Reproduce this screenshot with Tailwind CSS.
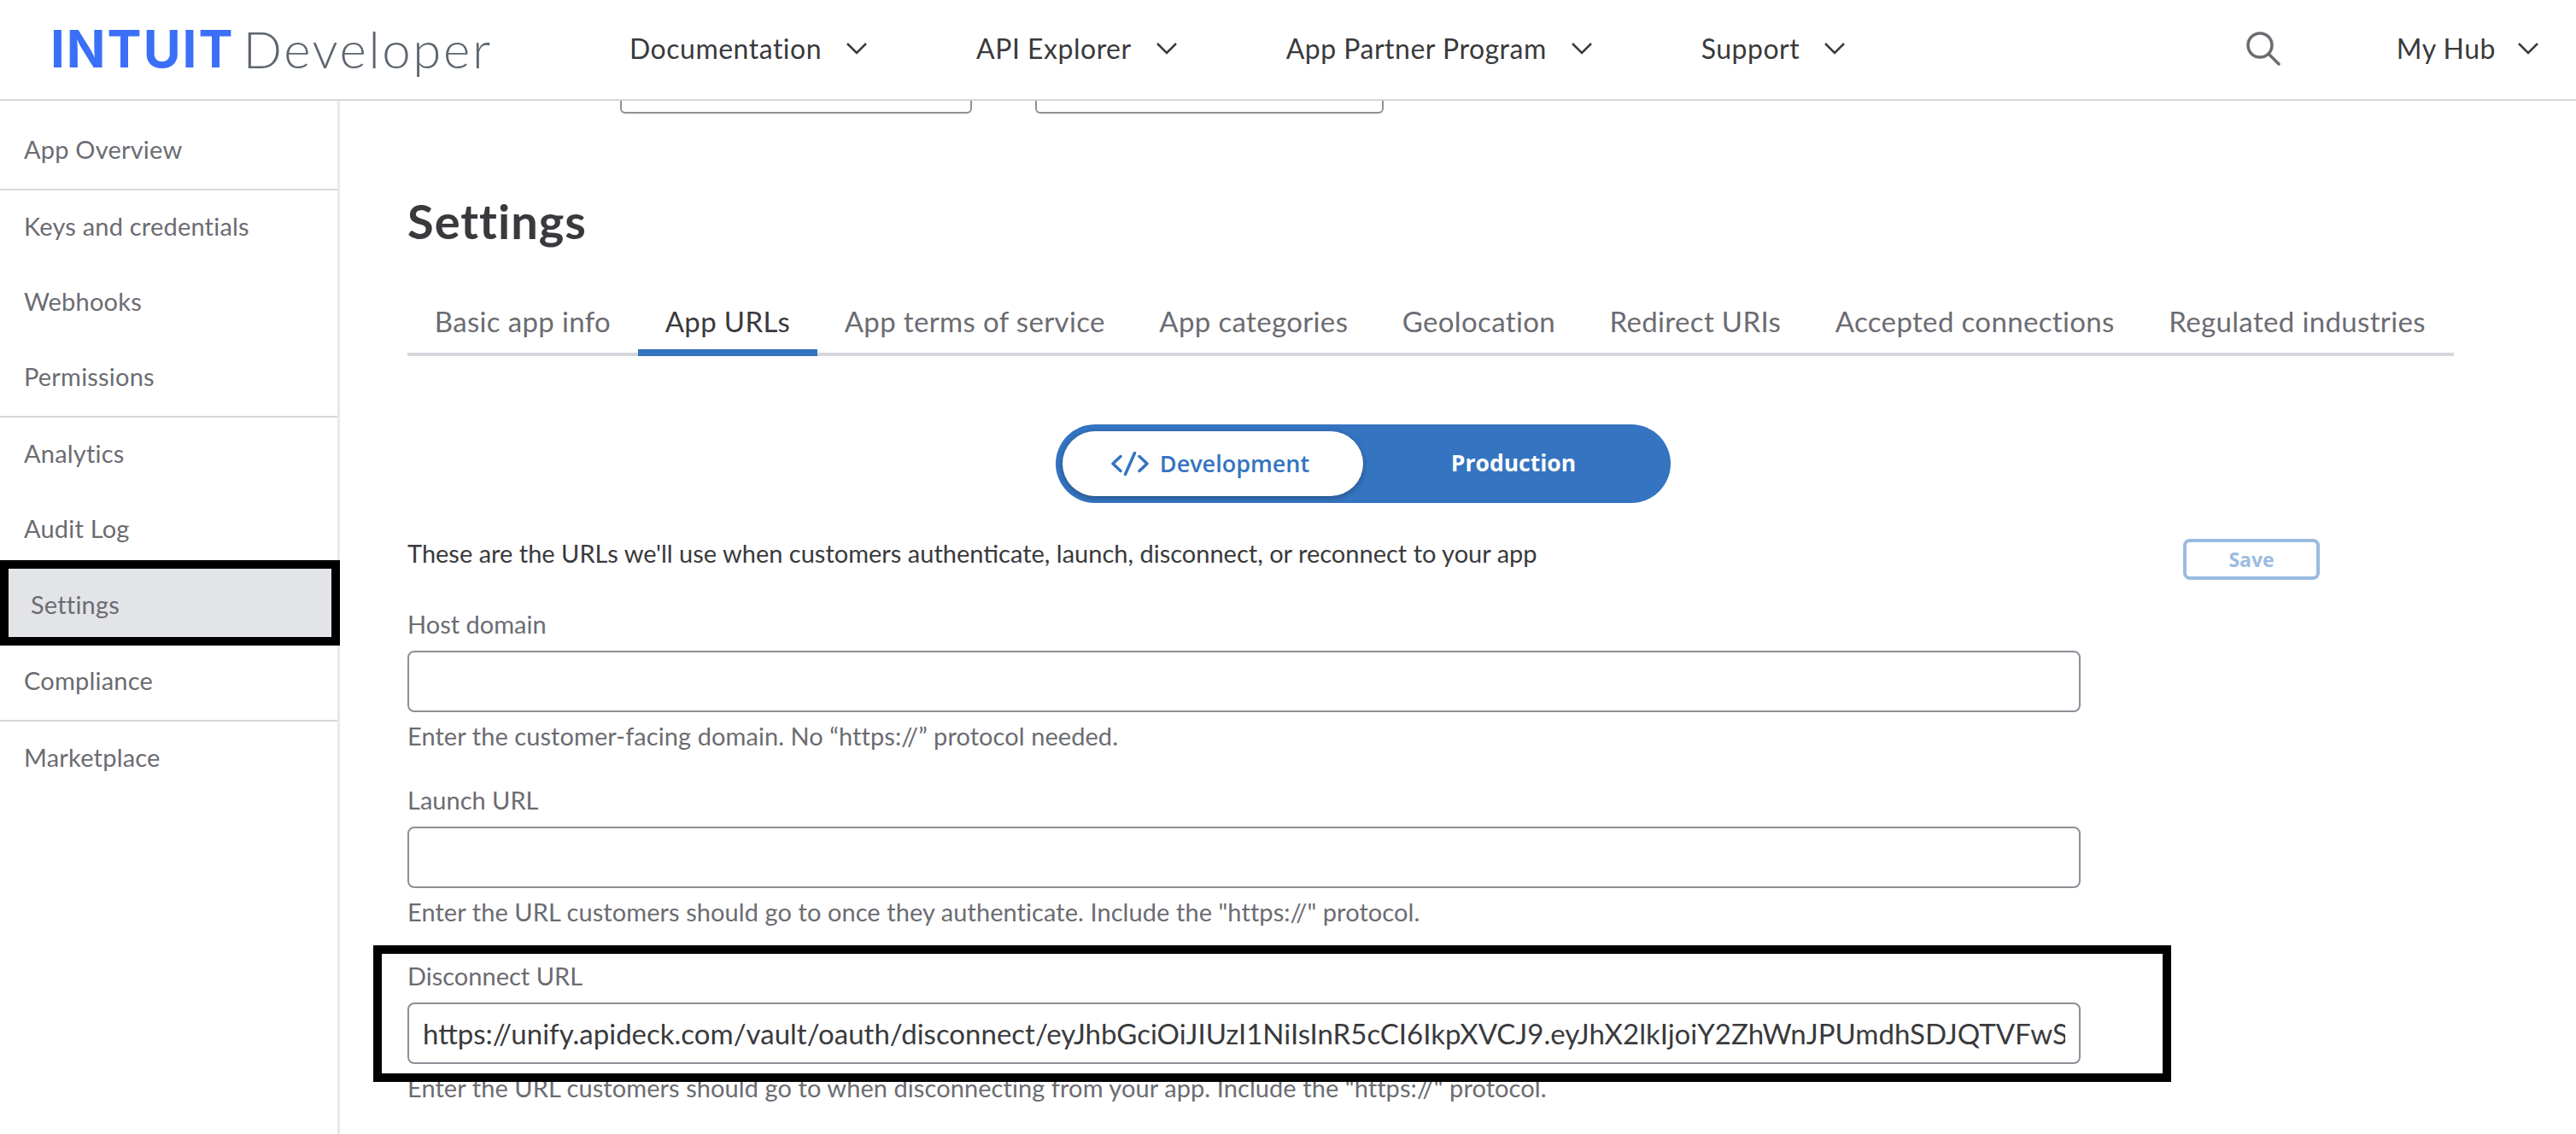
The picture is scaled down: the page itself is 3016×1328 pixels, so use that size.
<!DOCTYPE html>
<html lang="en">
<head>
    <meta charset="UTF-8">
    <title>Intuit Developer - Settings</title>
    <script src="https://cdn.jsdelivr.net/npm/@tailwindcss/browser@4"></script>
</head>
<body class="bg-white">
    <div class="relative w-[3016px] h-[1328px] overflow-hidden bg-white font-['Lato',sans-serif] text-[#393a3d]">

        <!-- top bar -->
        <header class="flex items-center h-[118px] pb-[2px] border-b-2 border-[#d4d7dc]">
            <div class="flex items-center w-[737px] pl-[59px] shrink-0">
                <span class="font-['Inter',sans-serif] font-bold text-[60px] leading-none tracking-[2px] text-[#3b6ff8]">INTUIT</span>
                <span class="ml-[10px] font-light text-[60px] leading-none tracking-[2.6px] text-[#5d6670]">Developer</span>
            </div>
            <nav class="flex items-center gap-[128px] text-[32px] tracking-[0.5px]">
                <a class="flex items-center gap-[29px]">Documentation
                    <svg class="w-[24px] h-[14px]" viewBox="0 0 24 14" fill="none" stroke="#393a3d" stroke-width="2.5"><path d="M1 1l11 11L23 1"/></svg>
                </a>
                <a class="flex items-center gap-[29px]">API Explorer
                    <svg class="w-[24px] h-[14px]" viewBox="0 0 24 14" fill="none" stroke="#393a3d" stroke-width="2.5"><path d="M1 1l11 11L23 1"/></svg>
                </a>
                <a class="flex items-center gap-[29px]">App Partner Program
                    <svg class="w-[24px] h-[14px]" viewBox="0 0 24 14" fill="none" stroke="#393a3d" stroke-width="2.5"><path d="M1 1l11 11L23 1"/></svg>
                </a>
                <a class="flex items-center gap-[29px]">Support
                    <svg class="w-[24px] h-[14px]" viewBox="0 0 24 14" fill="none" stroke="#393a3d" stroke-width="2.5"><path d="M1 1l11 11L23 1"/></svg>
                </a>
            </nav>
            <div class="ml-auto flex items-center gap-[136px] pr-[44px] text-[32px] tracking-[0.5px]">
                <svg class="w-[40px] h-[40px]" viewBox="0 0 40 40" fill="none" stroke="#6b6c72" stroke-width="3.5" stroke-linecap="round"><circle cx="16" cy="16" r="14"/><path d="M26 26l12 12"/></svg>
                <a class="flex items-center gap-[26px]">My Hub
                    <svg class="w-[24px] h-[14px]" viewBox="0 0 24 14" fill="none" stroke="#393a3d" stroke-width="2.5"><path d="M1 1l11 11L23 1"/></svg>
                </a>
            </div>
        </header>

        <div class="flex">
            <!-- side menu -->
            <aside class="w-[398px] h-[1210px] shrink-0 pt-[15px] border-r-[3px] border-[#e9e9eb] text-[29px] tracking-[0.2px] text-[#6b6c72]">
                <div class="border-b-2 border-[#d4d7dc]">
                    <div class="h-[88px] pb-[4px] flex items-center pl-[28px]">App Overview</div>
                </div>
                <div class="border-b-2 border-[#d4d7dc]">
                    <div class="h-[88px] pb-[4px] flex items-center pl-[28px]">Keys and credentials</div>
                    <div class="h-[88px] pb-[4px] flex items-center pl-[28px]">Webhooks</div>
                    <div class="h-[88px] pb-[4px] flex items-center pl-[28px]">Permissions</div>
                </div>
                <div>
                    <div class="h-[88px] pb-[4px] flex items-center pl-[28px]">Analytics</div>
                    <div class="h-[88px] pb-[4px] flex items-center pl-[28px]">Audit Log</div>
                    <div class="relative h-[90px] pb-[4px] flex items-center pl-[36px] bg-[#e3e4e8]">
                        Settings
                        <div class="absolute left-0 top-[-9px] w-[398px] h-[100px] border-[10px] border-black"></div>
                    </div>
                </div>
                <div class="border-b-2 border-[#d4d7dc]">
                    <div class="h-[88px] pb-[4px] flex items-center pl-[28px]">Compliance</div>
                </div>
                <div>
                    <div class="h-[88px] pb-[4px] flex items-center pl-[28px]">Marketplace</div>
                </div>
            </aside>

            <!-- content -->
            <main class="flex-1 min-w-0 pl-[79px]">
                <div class="flex gap-[74px] ml-[249px]">
                    <div class="w-[412px] h-[15px] border-x-2 border-b-2 border-[#8d9096] rounded-b-[6px]"></div>
                    <div class="w-[408px] h-[15px] border-x-2 border-b-2 border-[#8d9096] rounded-b-[6px]"></div>
                </div>

                <h1 class="mt-[96px] text-[56px] leading-[60px] tracking-[1px] font-bold">Settings</h1>

                <div class="mt-[67px] w-[2396px] flex whitespace-nowrap border-b-4 border-[#d4d7dc] text-[33px] leading-[40px] tracking-[0.35px] text-[#6b6c72]">
                    <a class="-mb-[4px] px-[31.75px] pb-[13px] border-b-8 border-transparent">Basic app info</a>
                    <a class="-mb-[4px] px-[31.75px] pb-[13px] border-b-8 border-[#3373c0] text-[#393a3d]">App URLs</a>
                    <a class="-mb-[4px] px-[31.75px] pb-[13px] border-b-8 border-transparent">App terms of service</a>
                    <a class="-mb-[4px] px-[31.75px] pb-[13px] border-b-8 border-transparent">App categories</a>
                    <a class="-mb-[4px] px-[31.75px] pb-[13px] border-b-8 border-transparent">Geolocation</a>
                    <a class="-mb-[4px] px-[31.75px] pb-[13px] border-b-8 border-transparent">Redirect URIs</a>
                    <a class="-mb-[4px] px-[31.75px] pb-[13px] border-b-8 border-transparent">Accepted connections</a>
                    <a class="-mb-[4px] px-[31.75px] pb-[13px] border-b-8 border-transparent">Regulated industries</a>
                </div>

                <!-- dev / prod switch -->
                <div class="mt-[80px] ml-[759px] w-[720px] h-[92px] flex items-center p-[8px] rounded-full bg-[#3474c0] font-['Open_Sans',sans-serif] font-bold text-[26.5px]">
                    <div class="w-[352px] h-[76px] pr-[6px] flex items-center justify-center gap-[13px] rounded-full bg-white font-semibold text-[27px] text-[#3474c0] shadow-[0_2px_6px_rgba(0,0,0,0.3)]">
                        <svg class="w-[44px] h-[28px]" viewBox="0 0 44 28" fill="none" stroke="#3474c0" stroke-width="3.5" stroke-linecap="round" stroke-linejoin="round"><path d="M11 5.5L2 14l9 8.5M33 5.5l9 8.5-9 8.5M27.5 1.5l-11 25"/></svg>
                        Development
                    </div>
                    <div class="flex-1 text-center text-white">Production</div>
                </div>

                <div class="mt-[39px] w-[2239px] flex justify-between items-start">
                    <p class="text-[29px] leading-[40px]">These are the URLs we'll use when customers authenticate, launch, disconnect, or reconnect to your app</p>
                    <button class="mt-[3px] w-[160px] h-[48px] border-4 border-[#9abbe0] rounded-[8px] font-['Open_Sans',sans-serif] font-bold text-[23px] leading-none text-[#9abbe0]">Save</button>
                </div>

                <!-- url fields -->
                <div class="mt-[34px] flex flex-col gap-[35px] text-[29px] text-[#6b6c72]">
                    <div class="pb-[2px]">
                        <label class="block leading-[36px] pb-[4px]">Host domain</label>
                        <input type="text" class="mt-[9px] block w-[1959px] h-[72px] px-[16px] border-2 border-[#8d9096] rounded-[8px] text-[33px]">
                        <p class="mt-[8px] leading-[40px] tracking-[0.07px]">Enter the customer-facing domain. No “https://” protocol needed.</p>
                    </div>
                    <div class="pb-[2px]">
                        <label class="block leading-[36px] pb-[4px]">Launch URL</label>
                        <input type="text" class="mt-[9px] block w-[1959px] h-[72px] px-[16px] border-2 border-[#8d9096] rounded-[8px] text-[33px]">
                        <p class="mt-[8px] leading-[40px] tracking-[0.07px]">Enter the URL customers should go to once they authenticate. Include the "https://" protocol.</p>
                    </div>
                    <div class="pb-[2px]">
                        <label class="block leading-[36px] pb-[4px]">Disconnect URL</label>
                        <input type="text" readonly value="https://unify.apideck.com/vault/oauth/disconnect/eyJhbGciOiJIUzI1NiIsInR5cCI6IkpXVCJ9.eyJhX2lkIjoiY2ZhWnJPUmdhSDJQTVFwS2lkIjoiY2ZhWnJPUmdh" class="mt-[9px] block w-[1959px] h-[72px] px-[16px] border-2 border-[#8d9096] rounded-[8px] text-[33px] text-[#393a3d]">
                        <p class="mt-[8px] leading-[40px] tracking-[0.07px]">Enter the URL customers should go to when disconnecting from your app. Include the "https://" protocol.</p>
                    </div>
                </div>
            </main>
        </div>

        <!-- annotation frame drawn over the disconnect field -->
        <div class="absolute left-[437px] top-[1107px] w-[2105px] h-[160px] border-[10px] border-black"></div>
    </div>
</body>
</html>
